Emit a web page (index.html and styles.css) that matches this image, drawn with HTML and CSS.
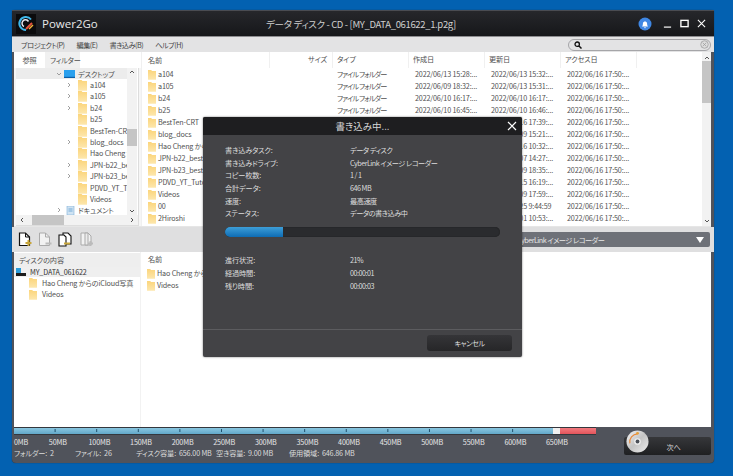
FILE: index.html
```html
<!DOCTYPE html>
<html lang="ja">
<head>
<meta charset="utf-8">
<title>Power2Go</title>
<link rel="stylesheet" href="styles.css">
</head>
<body>
<svg class="defs" width="0" height="0">
  <defs>
    <linearGradient id="fg" x1="0" y1="0" x2="0" y2="1"><stop offset="0" stop-color="#fbd57c"/><stop offset="1" stop-color="#fde7ad"/></linearGradient>
    <symbol id="folder" viewBox="0 0 10 13"><path d="M0 1h4l1 1h5v11H0z" fill="url(#fg)"/></symbol>
    <symbol id="chev" viewBox="0 0 6 6"><path d="M2 1l2 2-2 2" fill="none" stroke="#888" stroke-width=".8"/></symbol>
  </defs>
</svg>
<div class="window">
  <header class="titlebar">
    <div class="brand">
      <svg class="logo" viewBox="0 0 20 20"><rect width="20" height="20" fill="#0b0b0d"/><path d="M15 5.500A6.500 6.500 0 1 0 10 16" fill="none" stroke="#3fb6e8" stroke-width="2"/><path d="M12.500 7.500A3.500 3.500 0 1 0 8 12.500" fill="none" stroke="#e8e8f0" stroke-width="1.500"/><path d="M10 15l6-6" stroke="#e5523b" stroke-width="2"/><path d="M13 15l4-4" stroke="#f2b33a" stroke-width="1.500"/></svg>
      <span class="appname">Power2Go</span>
    </div>
    <div class="doc-title">データ ディスク - CD - [MY_DATA_061622_1.p2g]</div>
    <div class="controls">
      <svg class="bell" viewBox="0 0 14 14"><circle cx="7" cy="7" r="6.500" fill="#3f87e4"/><path d="M4 9.500c1-1 .8-2.500 1-3.500.3-1 1-1.500 2-1.500s1.700.5 2 1.500c.2 1 0 2.500 1 3.500zM6 10.300h2l-1 1.200z" fill="#fff"/></svg>
      <svg class="ctl" viewBox="0 0 10 10"><path d="M1 9h8" stroke="#fff" stroke-width="1.300"/></svg>
      <svg class="ctl" viewBox="0 0 10 10"><rect x="1" y="1.500" width="8" height="7" fill="none" stroke="#fff" stroke-width="1.500"/></svg>
      <svg class="ctl" viewBox="0 0 10 10"><path d="M1 1l8 8M9 1l-8 8" stroke="#fff" stroke-width="1.200"/></svg>
    </div>
  </header>

  <nav class="menubar">
    <span class="menu-item">プロジェクト(P)</span>
    <span class="menu-item">編集(E)</span>
    <span class="menu-item">書き込み(B)</span>
    <span class="menu-item">ヘルプ(H)</span>
    <div class="search">
      <svg class="mag" viewBox="0 0 8 8"><circle cx="3.200" cy="3.200" r="2.200" fill="none" stroke="#111" stroke-width="1.300"/><path d="M5 5l2.500 2.500" stroke="#111" stroke-width="1.500"/></svg>
      <svg class="clear" viewBox="0 0 10 10"><circle cx="5" cy="5" r="4.200" fill="#ddd" stroke="#999" stroke-width=".8"/><path d="M3 3l4 4M7 3l-4 4" stroke="#999" stroke-width=".8"/></svg>
    </div>
  </nav>

  <section class="browser">
    <aside class="left">
      <div class="tabs"><span class="tab active">参照</span><span class="tab">フィルター</span></div>
      <div class="tree-box">
        <div class="tree-main">
          <div class="tree">
            <div class="t-row lvl0 sel"><svg class="chev down"><use href="#chev"/></svg><svg class="desk" viewBox="0 0 11 8"><rect width="11" height="8" fill="#2aa0ee"/><rect y="6.800" width="11" height="1.200" fill="#0c5fa8"/></svg><span>デスクトップ</span></div>
            <div class="t-row lvl1"><svg class="chev"><use href="#chev"/></svg><svg class="tf"><use href="#folder"/></svg><span>a104</span></div>
            <div class="t-row lvl1"><svg class="chev"><use href="#chev"/></svg><svg class="tf"><use href="#folder"/></svg><span>a105</span></div>
            <div class="t-row lvl1"><svg class="chev"><use href="#chev"/></svg><svg class="tf"><use href="#folder"/></svg><span>b24</span></div>
            <div class="t-row lvl1"><i class="chev"></i><svg class="tf"><use href="#folder"/></svg><span>b25</span></div>
            <div class="t-row lvl1"><i class="chev"></i><svg class="tf"><use href="#folder"/></svg><span>BestTen-CRT</span></div>
            <div class="t-row lvl1"><svg class="chev"><use href="#chev"/></svg><svg class="tf"><use href="#folder"/></svg><span>blog_docs</span></div>
            <div class="t-row lvl1"><i class="chev"></i><svg class="tf"><use href="#folder"/></svg><span>Hao Cheng からのiCloud</span></div>
            <div class="t-row lvl1"><svg class="chev"><use href="#chev"/></svg><svg class="tf"><use href="#folder"/></svg><span>JPN-b22_best</span></div>
            <div class="t-row lvl1"><svg class="chev"><use href="#chev"/></svg><svg class="tf"><use href="#folder"/></svg><span>JPN-b23_best</span></div>
            <div class="t-row lvl1"><i class="chev"></i><svg class="tf"><use href="#folder"/></svg><span>PDVD_YT_Tutorial</span></div>
            <div class="t-row lvl1"><i class="chev"></i><svg class="tf"><use href="#folder"/></svg><span>Videos</span></div>
            <div class="t-row lvl0"><svg class="chev"><use href="#chev"/></svg><svg class="docico" viewBox="0 0 9 9"><rect x="1" width="7" height="9" fill="#cfe3f3" stroke="#7fb0d8" stroke-width=".6"/><path d="M2.500 3h4M2.500 5h4" stroke="#4c93cc" stroke-width=".7"/></svg><span>ドキュメント</span></div>
          </div>
          <div class="vscroll narrow">
            <svg class="arrow" viewBox="0 0 6 4"><path d="M1 3l2-2 2 2" fill="none" stroke="#444" stroke-width=".9"/></svg>
            <div class="track tree-track"><div class="thumb tree-thumb"></div></div>
            <svg class="arrow" viewBox="0 0 6 4"><path d="M1 1l2 2 2-2" fill="none" stroke="#444" stroke-width=".9"/></svg>
          </div>
        </div>
        <div class="hscroll">
          <svg class="harrow" viewBox="0 0 4 6"><path d="M3 1L1 3l2 2" fill="none" stroke="#444" stroke-width=".9"/></svg>
          <div class="hthumb"></div>
          <svg class="harrow" viewBox="0 0 4 6"><path d="M1 1l2 2-2 2" fill="none" stroke="#444" stroke-width=".9"/></svg>
        </div>
      </div>
    </aside>

    <div class="files">
      <div class="file-pane">
        <div class="f-row f-head">
          <span class="c-name">名前</span><span class="c-size">サイズ</span><span class="c-type">タイプ</span><span class="c-d">作成日</span><span class="c-d">更新日</span><span class="c-d">アクセス日</span>
        </div>
        <div class="f-row"><span class="c-name"><svg class="ff"><use href="#folder"/></svg>a104</span><span class="c-size"></span><span class="c-type">ファイル フォルダー</span><span class="c-d">2022/06/13 15:28:...</span><span class="c-d">2022/06/13 15:32:...</span><span class="c-d">2022/06/16 17:50:...</span></div>
        <div class="f-row"><span class="c-name"><svg class="ff"><use href="#folder"/></svg>a105</span><span class="c-size"></span><span class="c-type">ファイル フォルダー</span><span class="c-d">2022/06/09 18:32:...</span><span class="c-d">2022/06/13 15:31:...</span><span class="c-d">2022/06/16 17:50:...</span></div>
        <div class="f-row"><span class="c-name"><svg class="ff"><use href="#folder"/></svg>b24</span><span class="c-size"></span><span class="c-type">ファイル フォルダー</span><span class="c-d">2022/06/10 16:17:...</span><span class="c-d">2022/06/10 16:17:...</span><span class="c-d">2022/06/16 17:50:...</span></div>
        <div class="f-row"><span class="c-name"><svg class="ff"><use href="#folder"/></svg>b25</span><span class="c-size"></span><span class="c-type">ファイル フォルダー</span><span class="c-d">2022/06/10 16:45:...</span><span class="c-d">2022/06/10 16:46:...</span><span class="c-d">2022/06/16 17:50:...</span></div>
        <div class="f-row"><span class="c-name"><svg class="ff"><use href="#folder"/></svg>BestTen-CRT</span><span class="c-size"></span><span class="c-type">ファイル フォルダー</span><span class="c-d">2022/06/16 17:39:...</span><span class="c-d">2022/06/16 17:39:...</span><span class="c-d">2022/06/16 17:50:...</span></div>
        <div class="f-row"><span class="c-name"><svg class="ff"><use href="#folder"/></svg>blog_docs</span><span class="c-size"></span><span class="c-type">ファイル フォルダー</span><span class="c-d">2022/06/09 15:21:...</span><span class="c-d">2022/06/09 15:21:...</span><span class="c-d">2022/06/16 17:50:...</span></div>
        <div class="f-row"><span class="c-name"><svg class="ff"><use href="#folder"/></svg>Hao Cheng からのiCloud</span><span class="c-size"></span><span class="c-type">ファイル フォルダー</span><span class="c-d">2022/06/16 10:32:...</span><span class="c-d">2022/06/16 10:32:...</span><span class="c-d">2022/06/16 17:50:...</span></div>
        <div class="f-row"><span class="c-name"><svg class="ff"><use href="#folder"/></svg>JPN-b22_best</span><span class="c-size"></span><span class="c-type">ファイル フォルダー</span><span class="c-d">2022/06/07 14:27:...</span><span class="c-d">2022/06/07 14:27:...</span><span class="c-d">2022/06/16 17:50:...</span></div>
        <div class="f-row"><span class="c-name"><svg class="ff"><use href="#folder"/></svg>JPN-b23_best</span><span class="c-size"></span><span class="c-type">ファイル フォルダー</span><span class="c-d">2022/06/09 18:35:...</span><span class="c-d">2022/06/09 18:35:...</span><span class="c-d">2022/06/16 17:50:...</span></div>
        <div class="f-row"><span class="c-name"><svg class="ff"><use href="#folder"/></svg>PDVD_YT_Tutorial</span><span class="c-size"></span><span class="c-type">ファイル フォルダー</span><span class="c-d">2022/06/15 16:19:...</span><span class="c-d">2022/06/15 16:19:...</span><span class="c-d">2022/06/16 17:50:...</span></div>
        <div class="f-row"><span class="c-name"><svg class="ff"><use href="#folder"/></svg>Videos</span><span class="c-size"></span><span class="c-type">ファイル フォルダー</span><span class="c-d">2022/06/09 17:59:...</span><span class="c-d">2022/06/09 17:59:...</span><span class="c-d">2022/06/16 17:50:...</span></div>
        <div class="f-row"><span class="c-name"><svg class="ff"><use href="#folder"/></svg>00</span><span class="c-size"></span><span class="c-type">ファイル フォルダー</span><span class="c-d">2022/05/25 9:44:59</span><span class="c-d">2022/05/25 9:44:59</span><span class="c-d">2022/06/16 17:50:...</span></div>
        <div class="f-row"><span class="c-name"><svg class="ff"><use href="#folder"/></svg>2Hiroshi</span><span class="c-size"></span><span class="c-type">ファイル フォルダー</span><span class="c-d">2022/06/01 10:53:...</span><span class="c-d">2022/06/01 10:53:...</span><span class="c-d">2022/06/16 17:50:...</span></div>
        <div class="f-row"><span class="c-name"><svg class="ff"><use href="#folder"/></svg></span></div>
      </div>
      <div class="vscroll wide">
        <svg class="arrow" viewBox="0 0 6 4"><path d="M1 3l2-2 2 2" fill="none" stroke="#444" stroke-width=".9"/></svg>
        <div class="track"><div class="thumb list-thumb"></div></div>
        <svg class="arrow" viewBox="0 0 6 4"><path d="M1 1l2 2 2-2" fill="none" stroke="#444" stroke-width=".9"/></svg>
      </div>
    </div>
  </section>

  <section class="toolbar">
    <svg class="tool" viewBox="0 0 14 15"><path d="M1.500 1h6l4 4v8.500h-10z" fill="#fff" stroke="#111" stroke-width="1.200"/><path d="M7.500 1v4h4" fill="none" stroke="#111"/><path d="M10.500 8v6M7.500 11h6" stroke="#c8a63a" stroke-width="2"/></svg>
    <svg class="tool" viewBox="0 0 14 15"><path d="M1.500 1h6l4 4v8.500h-10z" fill="#f2f2f2" stroke="#aaa"/><path d="M7.500 1v4h4" fill="none" stroke="#aaa"/><path d="M7.500 11.500h6" stroke="#bbb" stroke-width="2"/></svg>
    <svg class="tool" viewBox="0 0 14 15"><path d="M5 1h5l3 3v8H5z" fill="#fff" stroke="#111" stroke-width="1.100"/><path d="M1 3h5l2 2v9H1z" fill="#fff" stroke="#111" stroke-width="1.100"/><path d="M6 11.500h6" stroke="#c8a63a" stroke-width="2"/></svg>
    <svg class="tool last" viewBox="0 0 14 15"><path d="M1 1h7l3 3v9H1z" fill="#f2f2f2" stroke="#aaa"/><path d="M5 1h3v12H5z" fill="#ececec" stroke="#aaa"/><path d="M10.500 9v5M8 11.500h5" stroke="#bbb" stroke-width="2"/></svg>
    <div class="drive"><span>CyberLink イメージ レコーダー</span><svg class="drive-arrow" viewBox="0 0 8 6"><path d="M0 0h8L4 6z" fill="#fff"/></svg></div>
  </section>

  <section class="disc">
    <aside class="disc-tree">
      <div class="disc-head">ディスクの内容</div>
      <div class="disc-root"><svg class="disc-ico" viewBox="0 0 10 8"><rect width="5" height="5" fill="#2b9bd8"/><rect y="5" width="10" height="3" fill="#1c1c1c"/></svg>MY_DATA_061622</div>
      <div class="disc-item"><svg class="df"><use href="#folder"/></svg>Hao Cheng からのiCloud写真</div>
      <div class="disc-item"><svg class="df"><use href="#folder"/></svg>Videos</div>
    </aside>
    <div class="disc-list">
      <div class="disc-list-head">名前</div>
      <div class="f-row disc-f"><svg class="ff"><use href="#folder"/></svg>Hao Cheng からのiCloud写真</div>
      <div class="f-row disc-f"><svg class="ff"><use href="#folder"/></svg>Videos</div>
    </div>
  </section>

  <footer class="footer">
    <div class="capacity">
      <div class="meter"><div class="m-used"></div><div class="m-white"></div><div class="m-red"></div></div>
      <div class="scale">
        <span class="first">0MB</span><span>50MB</span><span>100MB</span><span>150MB</span><span>200MB</span><span>250MB</span><span>300MB</span><span>350MB</span><span>400MB</span><span>450MB</span><span>500MB</span><span>550MB</span><span>600MB</span><span>650MB</span>
      </div>
      <div class="stats">
        <span>フォルダー:&nbsp; 2</span><span>ファイル:&nbsp; 26</span><span>ディスク容量:&nbsp; 656.00 MB</span><span>空き容量:&nbsp; 9.00 MB</span><span>使用領域:&nbsp; 646.86 MB</span>
      </div>
    </div>
    <button class="next">
      <svg class="cd" viewBox="0 0 24 24"><defs><linearGradient id="cdg" x1="0" y1="0" x2="1" y2="1"><stop offset="0" stop-color="#f5f5f5"/><stop offset=".5" stop-color="#c4c4c4"/><stop offset="1" stop-color="#efefef"/></linearGradient></defs><circle cx="12" cy="12" r="11.500" fill="url(#cdg)"/><path d="M4 14A8.500 8.500 0 0 1 12 4" fill="none" stroke="#e8893a" stroke-width="1.200"/><circle cx="12" cy="3.500" r="1.500" fill="#e8a03a"/><circle cx="12" cy="12" r="3.500" fill="#eee"/><circle cx="12" cy="12" r="2" fill="#4a4f57"/></svg>
      <span>次へ</span>
    </button>
  </footer>

  <div class="dialog">
    <div class="dlg-title"><span>書き込み中...</span><svg class="dlg-x" viewBox="0 0 10 10"><path d="M1 1l8 8M9 1l-8 8" stroke="#fff" stroke-width="1.200"/></svg></div>
    <div class="dlg-body">
      <dl class="info">
        <dt>書き込みタスク:</dt><dd>データ ディスク</dd>
        <dt>書き込みドライブ:</dt><dd>CyberLink イメージ レコーダー</dd>
        <dt>コピー枚数:</dt><dd>1 / 1</dd>
        <dt>合計データ:</dt><dd>646 MB</dd>
        <dt>速度:</dt><dd>最高速度</dd>
        <dt>ステータス:</dt><dd>データの書き込み中</dd>
      </dl>
      <div class="progress"><div class="progress-fill"></div></div>
      <dl class="info">
        <dt>進行状況:</dt><dd>21%</dd>
        <dt>経過時間:</dt><dd>00:00:01</dd>
        <dt>残り時間:</dt><dd>00:00:03</dd>
      </dl>
    </div>
    <div class="dlg-foot"><button class="cancel">キャンセル</button></div>
  </div>
</div>
</body>
</html>
```
FILE: styles.css
```css
* { box-sizing: border-box; }
html, body { margin: 0; height: 100%; }
body {
  background: #0361b1;
  font-family: "Noto Sans CJK JP", "Noto Sans", sans-serif;
  font-feature-settings: "palt";
  font-size: 7.200px;
  letter-spacing: -0.150px;
  color: #505050;
  overflow: hidden;
  padding: 10px 0 0 12px;
}
.defs { position: absolute; }
.window {
  position: relative;
  width: 702px;
  height: 453px;
  background: #50535b;
  border-radius: 3px 3px 4px 4px;
  padding: 0 3px 0 2px;
  display: flex;
  flex-direction: column;
  box-shadow: 0 0 1px #222;
}
.titlebar {
  height: 26px;
  margin: 0 -3px 0 -2px;
  padding: 2px 8px 2px 4px;
  background: linear-gradient(#26272b, #16171a);
  border-top: 1px solid #4a4c52;
  display: grid;
  grid-template-columns: 1fr auto 1fr;
  align-items: center;
}
.brand { display: flex; align-items: center; gap: 6px; }
.logo { width: 20px; height: 20px; }
.appname { font-family: "Open Sans", sans-serif; font-size: 11.500px; letter-spacing: 0; color: #e8e8e8; }
.doc-title { font-size: 9.500px; letter-spacing: -0.350px; color: #cfcfcf; white-space: nowrap; }
.controls { display: flex; justify-content: flex-end; align-items: center; gap: 8px; }
.bell { width: 14px; height: 14px; margin-right: 3px; }
.ctl { width: 9px; height: 9px; }

.menubar {
  height: 16px;
  margin: 0 -3px 0 -2px;
  padding-left: 9px;
  background: #e3e3e4;
  border-top: 1px solid #8d8d90;
  display: flex;
  align-items: center;
  color: #444;
  letter-spacing: -0.500px;
}
.menu-item { white-space: nowrap; margin-right: 12px; }
.search {
  margin-left: auto;
  margin-right: 3px;
  width: 143px;
  height: 12px;
  border: 1px solid #a5a5a8;
  border-radius: 6px;
  display: flex;
  align-items: center;
  justify-content: space-between;
  padding: 0 1px 0 5px;
}
.mag { width: 8px; height: 8px; }
.clear { width: 9px; height: 9px; }

.browser { height: 175px; display: flex; background: #fff; border-bottom: 1px solid #e6e6e6; }
.left { width: 127px; display: flex; flex-direction: column; background: #f6f6f6; }
.tabs { height: 16px; display: flex; align-items: stretch; background: #fff; }
.tab { padding: 3px 5px 0; background: #f0f0f0; white-space: nowrap; width: 35px; text-align: center; }
.tab.active { background: #fff; width: 31px; }
.tree-box { width: 123px; margin-left: 2px; flex: 1; min-height: 0; display: flex; flex-direction: column; background: #fff; border-right: 1px solid #ddd; }
.tree-main { flex: 1; min-height: 0; display: flex; }
.tree { width: 111px; overflow: hidden; }
.t-row { height: 11.400px; display: flex; align-items: center; white-space: nowrap; }
.t-row.lvl0 { padding-left: 40px; }
.t-row.lvl1 { padding-left: 50px; }
.t-row.sel { background: #ececec; }
.chev { display: block; width: 6px; height: 6px; margin-right: 6px; flex: none; }
.lvl0 .chev { margin-right: 2px; }
.chev.down { transform: rotate(90deg); }
.desk { width: 11px; height: 8px; margin-right: 3px; flex: none; }
.docico { width: 9px; height: 9px; margin: 0 3px 0 2px; flex: none; }
.tf { width: 9px; height: 12px; margin-right: 3px; flex: none; }
.vscroll { display: flex; flex-direction: column; align-items: center; background: #f2f2f2; }
.vscroll.narrow { width: 10px; padding: 2px 0; }
.vscroll.wide { width: 9px; padding: 4px 0 3px; }
.arrow { width: 6px; height: 4px; flex: none; }
.track { flex: 1; width: 100%; }
.tree-track { padding-top: 55px; }
.tree-thumb { height: 17px; }
.thumb { background: #c5c5c5; }
.list-thumb { height: 42px; margin-top: 1px; }
.hscroll { height: 11px; background: #f2f2f2; display: flex; align-items: center; padding: 0 4px; border-bottom: 1px solid #ddd; }
.harrow { width: 4px; height: 6px; flex: none; }
.hthumb { width: 32px; height: 10px; background: #c5c5c5; margin: 0 auto 0 8px; }
.files { flex: 1; min-width: 0; display: flex; border-left: 1px solid #f0f0f0; }
.file-pane { flex: 1; min-width: 0; overflow: hidden; }
.f-row {
  height: 12px;
  display: grid;
  grid-template-columns: 128px 63px 76px 76px 76px 76px;
  align-items: center;
  white-space: nowrap;
}
.f-head { height: 16px; }
.f-head span { height: 16px; line-height: 15px; border-right: 1px solid #f0f0f0; }
.c-name { padding-left: 6px; display: flex; align-items: center; overflow: hidden; }
.c-size { text-align: right; padding-right: 5px; }
.c-type { padding-left: 4px; letter-spacing: -0.900px; }
.f-head .c-type { letter-spacing: -0.150px; }
.c-d { padding-left: 6px; }
.f-head .c-d { padding-left: 4px; }
.ff { width: 8px; height: 11px; margin-right: 2px; flex: none; }

.toolbar {
  height: 25px;
  margin: 0 -3px 0 -2px;
  padding: 0 3px 0 6px;
  background: #dfdfe0;
  display: flex;
  align-items: center;
  gap: 6px;
}
.tool { width: 14px; height: 15px; flex: none; }
.tool.last { margin-left: 2px; }
.drive {
  margin-left: auto;
  margin-right: 1px;
  width: 260px;
  height: 15px;
  background: #6e7178;
  border-radius: 2px;
  color: #e8e8e8;
  letter-spacing: -0.500px;
  display: flex;
  align-items: center;
  justify-content: space-between;
  padding: 0 6px 0 67px;
}
.drive-arrow { width: 8px; height: 6px; }

.disc { height: 175px; display: flex; background: #fff; }
.disc-tree { width: 127px; padding-top: 1px; border-right: 1px solid #f2f2f2; }
.disc-head { height: 14px; background: #eee; padding-left: 5px; line-height: 14px; }
.disc-root { height: 10px; background: #efefef; display: flex; align-items: center; padding-left: 2px; color: #333; }
.disc-ico { width: 10px; height: 8px; margin-right: 4px; }
.disc-item { height: 11.500px; display: flex; align-items: center; padding-left: 15px; white-space: nowrap; }
.df { width: 8px; height: 11px; margin-right: 5px; flex: none; }
.disc-list { flex: 1; }
.disc-list-head { height: 15px; line-height: 14px; padding-left: 7px; }
.disc-f { display: flex; padding-left: 6px; }

.footer { height: 36px; display: flex; color: #e6e6e6; position: relative; }
.capacity { width: 583px; }
.meter {
  height: 8px;
  display: flex;
  padding: 1px 0;
  background: #34373d;
}
.m-used {
  width: 539px;
  background:
    linear-gradient(90deg, transparent 41px, #1e4e6a 41px) 0 1px / 41.600px 3px repeat-x,
    linear-gradient(#8ac6e0, #62a8c9);
}
.m-white { width: 7px; background: #f0f0f0; }
.m-red { flex: 1; background: linear-gradient(#f27a7f, #e2545b); }
.scale { display: flex; height: 12px; line-height: 12px; margin-top: 1px; color: #e8e8e8; }
.scale span { width: 41.600px; flex: none; text-align: center; }
.scale .first { width: 23px; text-align: left; }
.stats { display: grid; grid-template-columns: 61px 61px 80px 73px auto; line-height: 11px; color: #dcdcdc; white-space: nowrap; }
.next {
  position: relative;
  margin: 10px 0 0 28px;
  width: 87px;
  height: 18px;
  background: linear-gradient(#36373a, #1f2022);
  border: 0;
  border-radius: 2px;
  color: #ddd;
  font: inherit;
  font-feature-settings: inherit;
  letter-spacing: inherit;
  padding: 1px 0 0 12px;
}
.cd { position: absolute; left: 2px; top: -7px; width: 23px; height: 23px; }

.dialog {
  position: absolute;
  left: 191px;
  top: 107px;
  width: 319px;
  height: 240px;
  background: #434346;
  box-shadow: 0 0 2px rgba(0,0,0,.6);
  border-radius: 2px;
  display: flex;
  flex-direction: column;
  color: #ddd;
}
.dlg-title {
  height: 18px;
  flex: none;
  background: #1e1e20;
  border-radius: 2px 2px 0 0;
  display: flex;
  align-items: center;
  justify-content: center;
  position: relative;
  font-size: 9.500px;
  letter-spacing: 0;
  color: #d8d8d8;
}
.dlg-x { position: absolute; right: 5px; top: 4px; width: 10px; height: 10px; }
.dlg-body { flex: 1; padding: 9px 22px 0; }
.info { margin: 0; display: grid; grid-template-columns: 125px 1fr; grid-auto-rows: 12.700px; line-height: 12.700px; }
.info dt, .info dd { margin: 0; white-space: nowrap; }
.info dd { letter-spacing: -0.500px; }
.progress { height: 10px; width: 275px; margin: 7px 0 17px; background: #2a2b2e; border-radius: 5px; overflow: hidden; box-shadow: inset 0 0 1px #111; }
.progress-fill { width: 21%; height: 100%; background: linear-gradient(#3d9ed8, #0e6cb4); }
.dlg-foot { height: 28px; flex: none; border-top: 1px solid #5c5c5f; display: flex; justify-content: flex-end; padding: 5px 10px 0 0; }
.cancel {
  width: 85px;
  height: 16px;
  background: linear-gradient(#353538, #262628);
  border: 0;
  border-radius: 3px;
  color: #ddd;
  font: inherit;
  font-feature-settings: inherit;
  letter-spacing: -0.500px;
  padding: 0;
}
```
